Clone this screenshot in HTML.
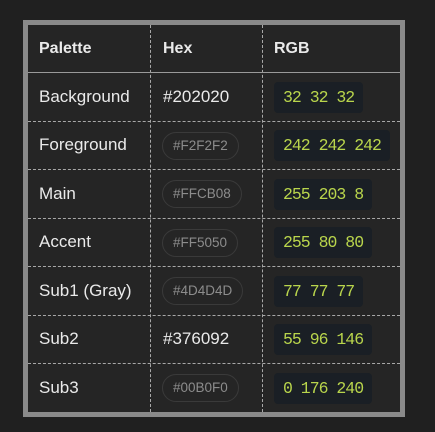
<!DOCTYPE html>
<html><head><style>
html,body{margin:0;padding:0;background:#202020;width:435px;height:432px;overflow:hidden}
.box{position:absolute;left:23px;top:20px;width:372px;height:387px;border:5px solid #8a8a8a;background:#252525}
.vl{position:absolute;top:0;height:387px;border-left:1px dashed #a8a8a8}
.hl{position:absolute;left:0;width:372px;border-top:1px dashed #a8a8a8}
.t{position:absolute;font-family:"Liberation Sans",sans-serif;font-size:17px;color:#eaeaea;line-height:20px}
.h{font-weight:bold;font-size:16px}
.pill{position:absolute;border:1px solid #3a3a3a;border-radius:14px;font-family:"Liberation Sans",sans-serif;font-size:13.5px;color:#8c8c8c;line-height:26px;padding:0 10px;box-sizing:border-box;height:28px}
.chip{position:absolute;left:246px;height:31px;background:#1a1f25;border-radius:4px;font-family:"Liberation Mono",monospace;font-size:16.5px;color:#b9d54c;line-height:31px;padding:0 9px;letter-spacing:-1px}
</style></head><body>
<div class="box">
<div class="vl" style="left:122px"></div>
<div class="vl" style="left:234px"></div>
<div class="hl" style="top:47px;border-top:1px solid #9a9a9a"></div>
<div class="hl" style="top:96px"></div>
<div class="hl" style="top:144px"></div>
<div class="hl" style="top:193px"></div>
<div class="hl" style="top:241px"></div>
<div class="hl" style="top:290px"></div>
<div class="hl" style="top:338px"></div>

<div class="t h" style="left:11px;top:14px">Palette</div>
<div class="t h" style="left:135px;top:14px">Hex</div>
<div class="t h" style="left:246px;top:14px">RGB</div>

<div class="t" style="left:11px;top:62px">Background</div>
<div class="t" style="left:135px;top:62px">#202020</div>
<div class="chip" style="top:57px">32 32 32</div>

<div class="t" style="left:11px;top:110px">Foreground</div>
<div class="pill" style="left:134px;top:107px">#F2F2F2</div>
<div class="chip" style="top:105px">242 242 242</div>

<div class="t" style="left:11px;top:159px">Main</div>
<div class="pill" style="left:134px;top:155px">#FFCB08</div>
<div class="chip" style="top:154px">255 203 8</div>

<div class="t" style="left:11px;top:207px">Accent</div>
<div class="pill" style="left:134px;top:204px">#FF5050</div>
<div class="chip" style="top:202px">255 80 80</div>

<div class="t" style="left:11px;top:256px">Sub1 (Gray)</div>
<div class="pill" style="left:134px;top:252px">#4D4D4D</div>
<div class="chip" style="top:251px">77 77 77</div>

<div class="t" style="left:11px;top:304px">Sub2</div>
<div class="t" style="left:135px;top:304px">#376092</div>
<div class="chip" style="top:299px">55 96 146</div>

<div class="t" style="left:11px;top:353px">Sub3</div>
<div class="pill" style="left:134px;top:349px">#00B0F0</div>
<div class="chip" style="top:348px">0 176 240</div>
</div>
</body></html>
